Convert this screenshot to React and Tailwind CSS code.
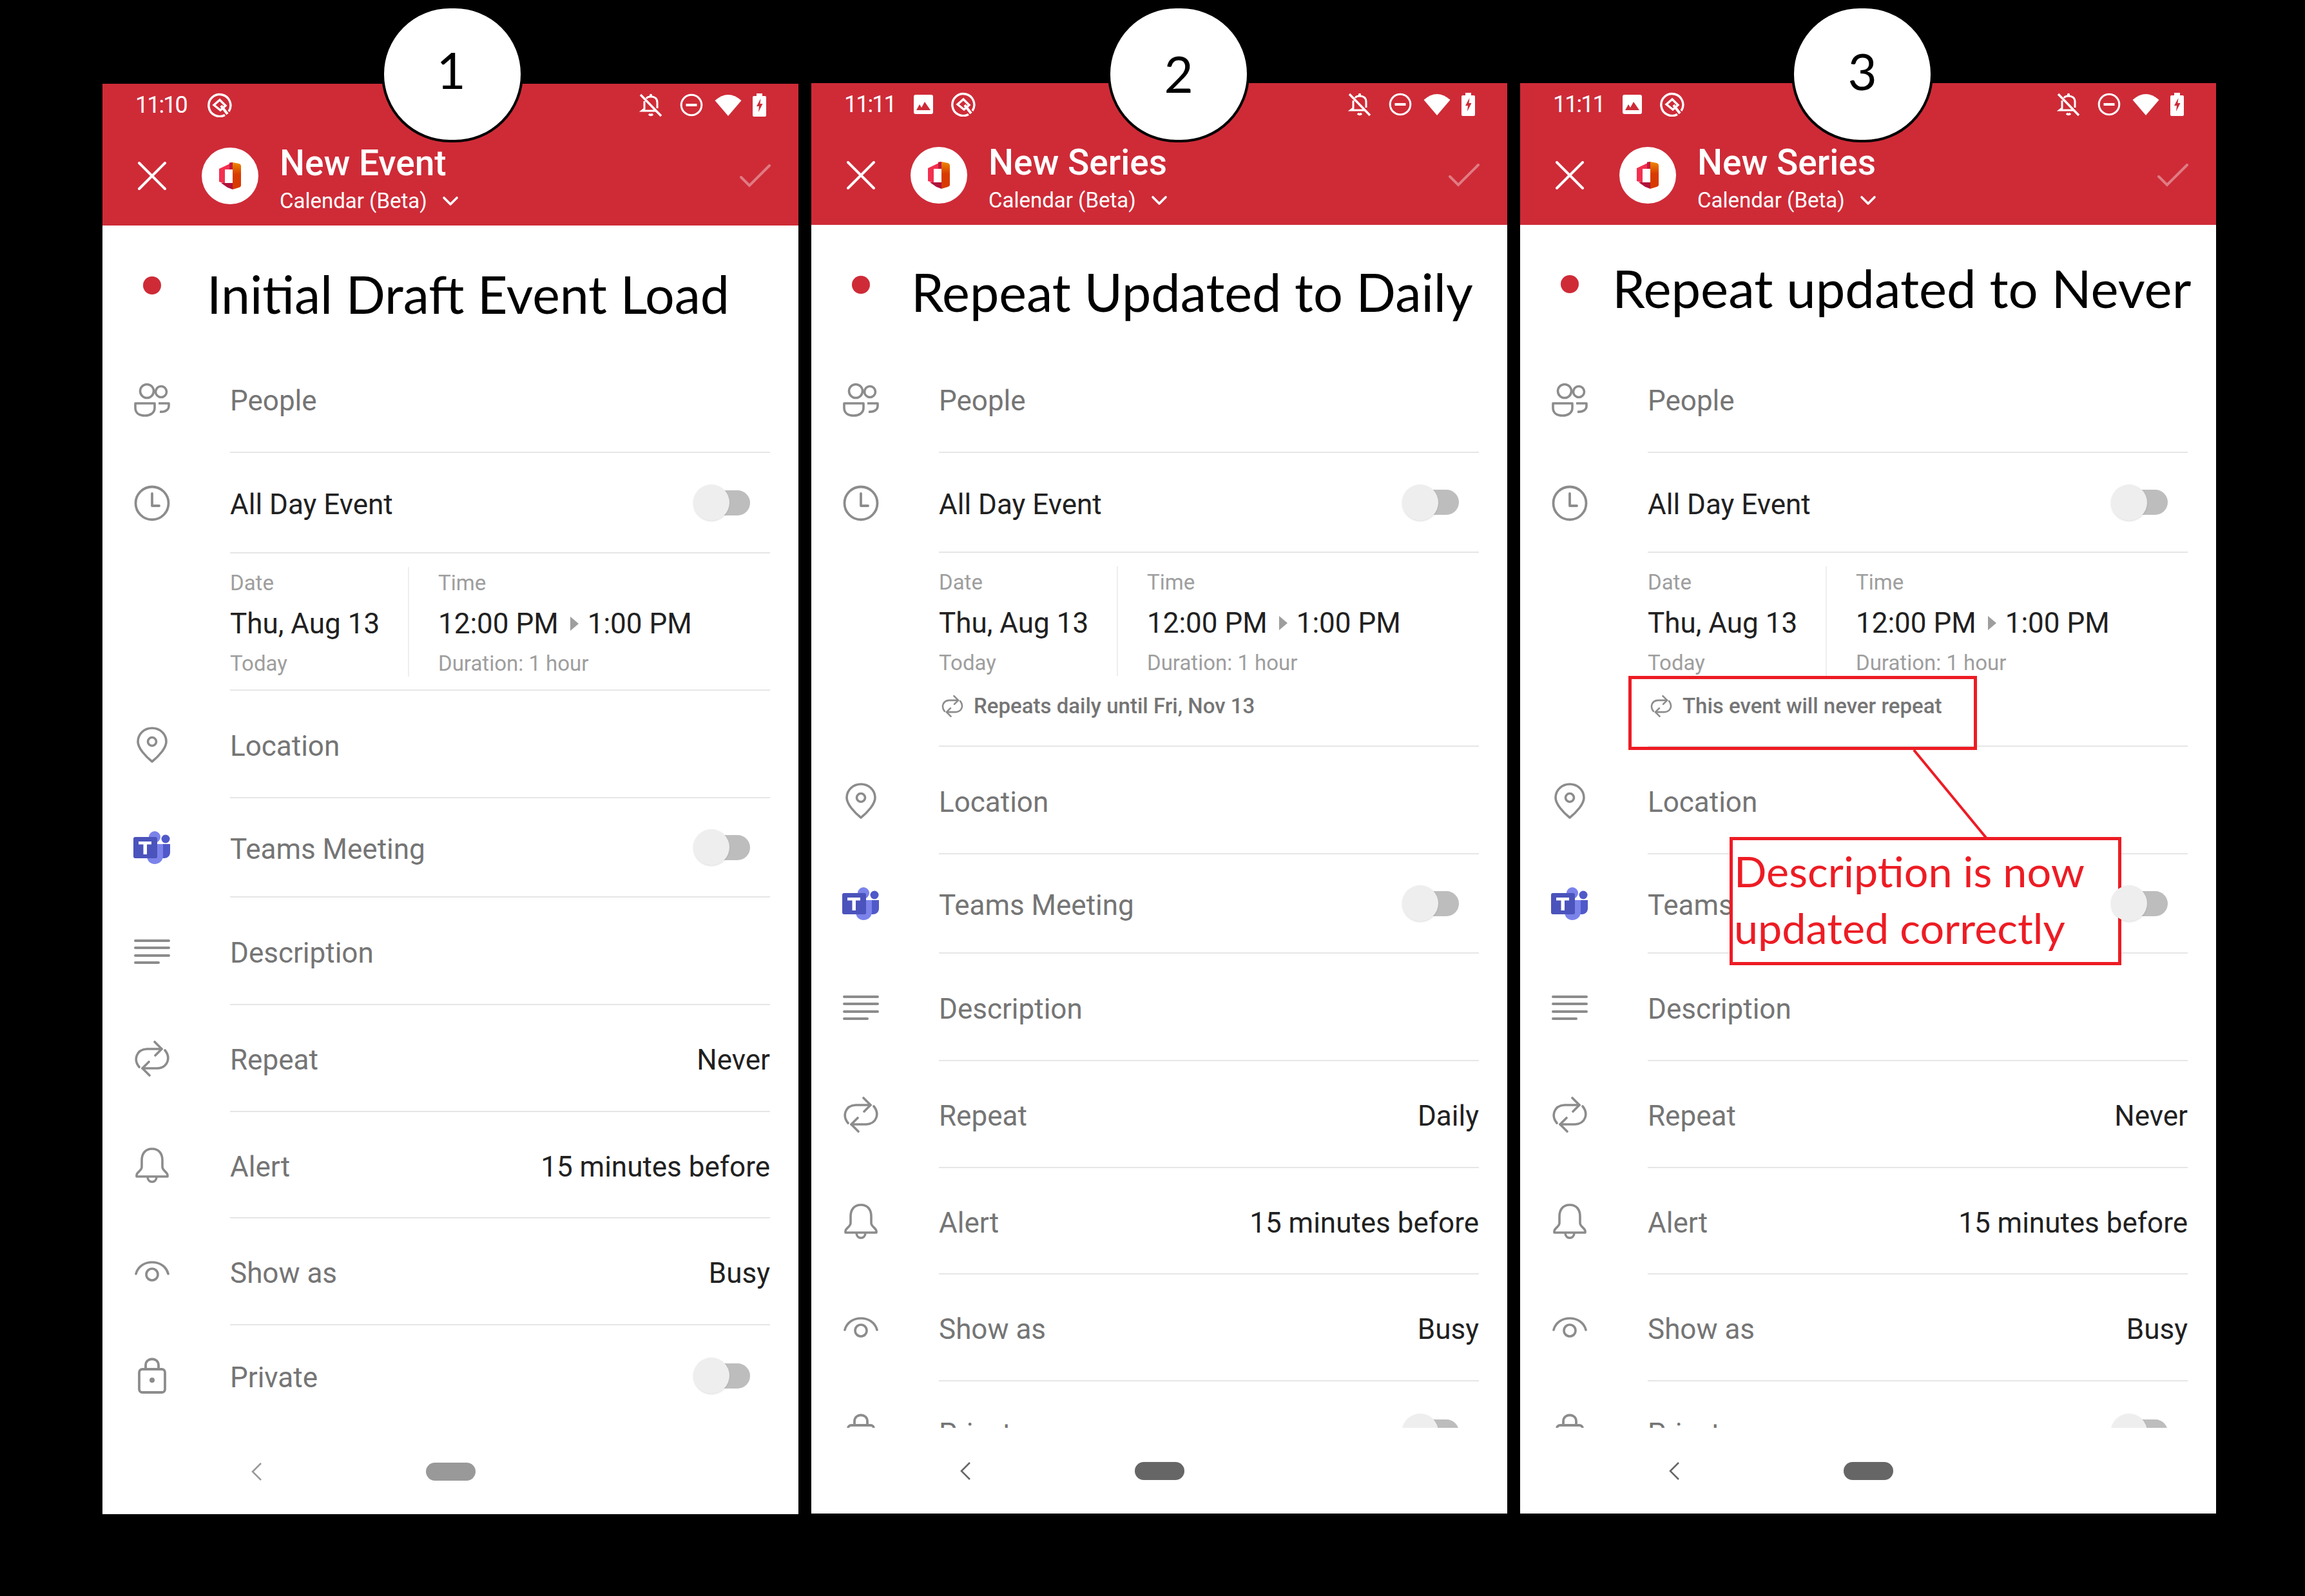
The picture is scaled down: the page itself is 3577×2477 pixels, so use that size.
import React from "react";

const G = "#8c8c8c";

function Q() {
  return (
    <svg width="38" height="38" viewBox="0 0 38 38" fill="none" stroke="#fff" strokeWidth="3.4">
      <path d="M27 34.5 A17 17 0 1 1 33 29" />
      <path d="M10 19 L19 11 L28 20 L20 27 Z" />
      <path d="M21 20 L31 33" strokeWidth="4" />
    </svg>
  );
}
function Picture() {
  return (
    <svg width="30" height="30" viewBox="0 0 30 30">
      <rect x="0" y="0" width="30" height="30" rx="3" fill="#fff" />
      <path d="M4 24 L9 15 L12 20 L17 11 L26 24 Z" fill="#ce2b37" />
    </svg>
  );
}
function BellOff() {
  return (
    <svg width="36" height="38" viewBox="0 0 36 38" fill="none" stroke="#fff" strokeWidth="3">
      <path d="M28 24 V15 C28 9 24 6 18 6 C15 6 12 7 11 9" />
      <path d="M8 13 V25 L4 28 H27" />
      <path d="M15 33 Q18 36 21 33" strokeWidth="3.5" />
      <circle cx="18" cy="4" r="2.2" fill="#fff" stroke="none" />
      <path d="M2 3 L34 36" strokeWidth="3.4" />
    </svg>
  );
}
function Dnd() {
  return (
    <svg width="36" height="36" viewBox="0 0 36 36" fill="none" stroke="#fff">
      <circle cx="18" cy="18" r="15.8" strokeWidth="3" />
      <path d="M9.5 18 H26.5" strokeWidth="4" />
    </svg>
  );
}
function Wifi() {
  return (
    <svg width="42" height="36" viewBox="0 0 42 36">
      <path d="M0.5 11 Q21 -7 41.5 11 L21 35 Z" fill="#fff" />
    </svg>
  );
}
function Battery() {
  return (
    <svg width="21" height="36" viewBox="0 0 21 36">
      <path d="M6 0 H15 V4 H19 Q21 4 21 6 V34 Q21 36 19 36 H2 Q0 36 0 34 V6 Q0 4 2 4 H6 Z" fill="#fff" />
      <path d="M12.5 8 L6 20 H10 L9 29 L15.5 16 H11.5 Z" fill="#ce2b37" />
    </svg>
  );
}
function CloseX() {
  return (
    <svg width="44" height="44" viewBox="0 0 44 44" stroke="#fff" strokeWidth="4" strokeLinecap="round">
      <path d="M2 2 L42 42 M42 2 L2 42" />
    </svg>
  );
}
function Check() {
  return (
    <svg width="48" height="37" viewBox="0 0 48 37" fill="none" stroke="#fff" strokeOpacity="0.38" strokeWidth="4" strokeLinecap="round">
      <path d="M2 20 L15 33 L46 2" />
    </svg>
  );
}
function Chevron() {
  return (
    <svg width="26" height="16" viewBox="0 0 26 16" fill="none" stroke="#fff" strokeWidth="3.6" strokeLinecap="round" strokeLinejoin="round">
      <path d="M3 3 L13 13 L23 3" />
    </svg>
  );
}
function Office({ id }) {
  return (
    <svg width="34" height="42" viewBox="0 0 34 42">
      <defs>
        <linearGradient id={id} x1="0" y1="0" x2="0" y2="1">
          <stop offset="0" stopColor="#ec8a00" />
          <stop offset="0.45" stopColor="#d83b01" />
        </linearGradient>
      </defs>
      <path d="M0 10 L21 0 V11 L9 11 V33 L0 30 Z" fill="#f3304f" />
      <path d="M21 0 L31 2 Q34 3 34 6 V36 Q34 38 31 39 L21 42 Z" fill={`url(#${id})`} />
      <path d="M3 32 L21 32 V42 L13 39 Z" fill="#b0123b" />
      <path d="M16 0.5 L21 0 V11 L16 11 Z" fill="#c2183f" />
    </svg>
  );
}
function People() {
  return (
    <svg width="56" height="54" viewBox="0 0 56 54" fill="none" stroke={G} strokeWidth="3.6">
      <circle cx="20" cy="14" r="10.5" />
      <circle cx="42" cy="15" r="8.5" />
      <path d="M2 33 H32 V40 C32 48 25 52 17 52 C8 52 2 48 2 40 Z" strokeLinejoin="round" />
      <path d="M38 33 H54 V37 C54 43 48 47 40 46" strokeLinejoin="round" />
    </svg>
  );
}
function Clock() {
  return (
    <svg width="56" height="56" viewBox="0 0 56 56" fill="none" stroke={G} strokeWidth="3.8" strokeLinecap="round" strokeLinejoin="round">
      <circle cx="28" cy="28" r="25.5" />
      <path d="M28 13 V32 H39" />
    </svg>
  );
}
function Pin() {
  return (
    <svg width="48" height="56" viewBox="0 0 48 56" fill="none" stroke={G} strokeWidth="3.6" strokeLinejoin="round">
      <path d="M24 2 C36 2 46 11 46 23 C46 33 34 46 24 54 C14 46 2 33 2 23 C2 11 12 2 24 2 Z" />
      <circle cx="24" cy="23" r="6.5" />
    </svg>
  );
}
function Teams() {
  return (
    <svg width="58" height="52" viewBox="0 0 58 52">
      <circle cx="50" cy="12" r="6.5" fill="#5059c9" />
      <path d="M42 20 H57 V33 C57 39 52 42 48 42 H42 Z" fill="#5059c9" />
      <circle cx="33" cy="9" r="9" fill="#7b83eb" />
      <path d="M21 20 H46 V38 C46 46 40 51 33 51 C26 51 21 46 21 38 Z" fill="#7b83eb" />
      <path d="M28 12 H37 V38 Q37 42 33 42 H28 Z" fill="#3d43a3" />
      <rect x="0" y="9" width="37" height="33" rx="3" fill="#4b53bc" />
      <path d="M8 16 H28 V20.5 H21 V36 H15.5 V20.5 H8 Z" fill="#fff" />
    </svg>
  );
}
function Lines() {
  return (
    <svg width="56" height="40" viewBox="0 0 56 40" fill="none" stroke={G} strokeWidth="4" strokeLinecap="round">
      <path d="M2 3 H54 M2 14 H54 M2 26 H54 M2 37 H38" />
    </svg>
  );
}
function Repeat({ size = 56, color = G }) {
  return (
    <svg width={size} height={size} viewBox="0 0 56 56" fill="none" stroke={color} strokeWidth={size < 40 ? 4.2 : 3.6} strokeLinecap="round" strokeLinejoin="round">
      <path d="M8 41 C-1 30 3 14 20 13 L43 13" />
      <path d="M32 2 L43 13 L33 23" />
      <path d="M48 15 C57 26 53 42 36 43 L13 43" />
      <path d="M24 54 L13 43 L23 33" />
    </svg>
  );
}
function Bell() {
  return (
    <svg width="52" height="56" viewBox="0 0 52 56" fill="none" stroke={G} strokeWidth="3.6" strokeLinejoin="round">
      <path d="M26 2 C37 2 42 10 42 20 V30 C42 36 50 38 50 43 V45 H2 V43 C2 38 10 36 10 30 V20 C10 10 15 2 26 2 Z" />
      <path d="M19 45 C19 56 33 56 33 45" />
    </svg>
  );
}
function Eye() {
  return (
    <svg width="54" height="34" viewBox="0 0 54 34" fill="none" stroke={G} strokeWidth="3.6" strokeLinecap="round">
      <path d="M2 20 C8 -4 46 -4 52 20" />
      <circle cx="27" cy="21" r="9" />
    </svg>
  );
}
function Lock() {
  return (
    <svg width="44" height="56" viewBox="0 0 44 56" fill="none" stroke={G} strokeWidth="3.8" strokeLinejoin="round">
      <rect x="2" y="18" width="40" height="36" rx="5" />
      <path d="M12 18 V12 C12 -1 32 -1 32 12 V18" />
      <circle cx="22" cy="35" r="4" fill={G} stroke="none" />
    </svg>
  );
}
function Toggle() {
  return (
    <div className="mr-[31px] flex items-center">
      <div className="z-10 h-[56px] w-[56px] rounded-full bg-[#eeeeee] shadow-sm" />
      <div className="-ml-[37px] h-[39px] w-[69px] rounded-full bg-[#bdbdbd]" />
    </div>
  );
}

function Row({ h, icon, children }) {
  return (
    <div className={`flex ${h}`}>
      <div className="flex w-[154px] items-center justify-center">{icon}</div>
      <div className="mx-[44px] flex flex-1 items-center justify-between border-b-2 border-[#e6e6e6]">{children}</div>
    </div>
  );
}
const Label = ({ children, dark }) => (
  <span className={`pt-[6px] ${dark ? "text-[#212121]" : "text-[#757575]"}`}>{children}</span>
);
const Val = ({ children }) => <span className="pt-[6px] text-[#212121]">{children}</span>;

function Phone({ p }) {
  return (
    <div className={`flex h-[2220px] w-[1080px] flex-col bg-white ${p.top}`}>
      <div className="flex h-[66px] items-center bg-[#ce2b37] pr-[50px] text-white">
        <span className={`text-[36px] tracking-[-2px] ${p.timeCls}`}>{p.time}</span>
        {p.pic && <span className="ml-[28px] mr-[28px] flex"><Picture /></span>}
        <span className={`flex ${p.pic ? "" : "ml-[32px]"}`}><Q /></span>
        <div className="ml-auto flex items-center">
          <BellOff />
          <span className="ml-[27px] flex"><Dnd /></span>
          <span className="ml-[18px] flex"><Wifi /></span>
          <span className="ml-[17px] flex"><Battery /></span>
        </div>
      </div>
      <div className="flex h-[154px] items-center bg-[#ce2b37] text-white">
        <div className="flex w-[154px] justify-center"><CloseX /></div>
        <div className="flex h-[88px] w-[88px] items-center justify-center rounded-full bg-white">
          <Office id={p.id} />
        </div>
        <div className="ml-[33px] mt-[7px] self-start pt-[18px]">
          <div className="text-[55px] font-medium leading-[64px]">{p.head}</div>
          <div className="flex items-center text-[33px] leading-[54px]">
            Calendar (Beta)
            <span className="ml-[23px] flex"><Chevron /></span>
          </div>
        </div>
        <div className="ml-auto mr-[43px] flex"><Check /></div>
      </div>
      <div className="h-[1867px] overflow-hidden text-[44px]">
        <div className="flex h-[187px] items-start">
          <div className="flex w-[154px] justify-center">
            <div className={`h-[28px] w-[28px] rounded-full bg-[#ce2b37] ${p.dotCls}`} />
          </div>
          <div className={`whitespace-nowrap font-[family-name:Lato,sans-serif] leading-[100px] text-black ${p.titleCls}`}>
            {p.title}
          </div>
        </div>
        <Row h={p.h[0]} icon={<People />}><Label>People</Label></Row>
        <Row h={p.h[1]} icon={<Clock />}><Label dark>All Day Event</Label><Toggle /></Row>
        <div className={`flex ${p.h[2]}`}>
          <div className="w-[154px]" />
          <div className="mx-[44px] flex-1 border-b-2 border-[#e6e6e6] pt-[21px]">
            <div className="flex">
              <div className="h-[170px] w-[278px] border-r-2 border-[#eeeeee]">
                <div className="text-[33px] leading-[50px] text-[#9e9e9e]">Date</div>
                <div className="leading-[76px] text-[#212121]">Thu, Aug 13</div>
                <div className="text-[33px] leading-[48px] text-[#9e9e9e]">Today</div>
              </div>
              <div className="pl-[45px]">
                <div className="text-[33px] leading-[50px] text-[#9e9e9e]">Time</div>
                <div className="flex items-center leading-[76px] text-[#212121]">
                  12:00 PM
                  <svg className="ml-[18px] mr-[14px]" width="13" height="22" viewBox="0 0 13 22"><path d="M0 0 L13 11 L0 22 Z" fill="#9e9e9e" /></svg>
                  1:00 PM
                </div>
                <div className="text-[33px] leading-[48px] text-[#9e9e9e]">Duration: 1 hour</div>
              </div>
            </div>
            {p.note && (
              <div className="mt-[21px] flex h-[44px] items-center pl-[4px] text-[33px] font-medium text-[#757575]">
                <Repeat size={34} />
                <span className="ml-[16px]">{p.note}</span>
              </div>
            )}
          </div>
        </div>
        <Row h={p.h[3]} icon={<Pin />}><Label>Location</Label></Row>
        <Row h={p.h[4]} icon={<Teams />}><Label>Teams Meeting</Label><Toggle /></Row>
        <Row h={p.h[5]} icon={<Lines />}><Label>Description</Label></Row>
        <Row h={p.h[6]} icon={<Repeat />}><Label>Repeat</Label><Val>{p.repeat}</Val></Row>
        <Row h={p.h[7]} icon={<Bell />}><Label>Alert</Label><Val>15 minutes before</Val></Row>
        <Row h={p.h[8]} icon={<Eye />}><Label>Show as</Label><Val>Busy</Val></Row>
        <div className={`flex ${p.h[9]}`}>
          <div className="flex w-[154px] items-center justify-center"><Lock /></div>
          <div className="mx-[44px] flex flex-1 items-center justify-between"><Label>Private</Label><Toggle /></div>
        </div>
      </div>
      <div className="flex h-[133px] items-center pl-[231px]">
        <svg width="16" height="28" viewBox="0 0 16 28" fill="none" stroke={p.nav} strokeWidth="2.6"><path d="M15 1 L2 14 L15 27" /></svg>
        <div className={`ml-[255px] h-[28px] w-[77px] rounded-full ${p.pill}`} />
      </div>
    </div>
  );
}

const phones = [
  {
    id: "o1", top: "", time: "11:10", timeCls: "ml-[51px]", head: "New Event", title: "Initial Draft Event Load",
    dotCls: "mt-[79px]", titleCls: "ml-[8px] mt-[56px] text-[80.6px]", repeat: "Never",
    nav: "#999999", pill: "bg-[#999999]",
    h: ["h-[166px]", "h-[156px]", "h-[213px]", "h-[167px]", "h-[154px]", "h-[167px]", "h-[166px]", "h-[165px]", "h-[166px]", "h-[156px]"],
  },
  {
    id: "o2", top: "-mt-px", time: "11:11", timeCls: "ml-[51px]", pic: true, head: "New Series", title: "Repeat Updated to Daily",
    dotCls: "mt-[79px]", titleCls: "ml-[1px] mt-[54px] text-[81px]", repeat: "Daily", note: "Repeats daily until Fri, Nov 13",
    nav: "#666666", pill: "bg-[#666666]",
    h: ["h-[167px]", "h-[155px]", "h-[301px]", "h-[167px]", "h-[154px]", "h-[167px]", "h-[166px]", "h-[165px]", "h-[166px]", "h-[156px]"],
  },
  {
    id: "o3", top: "-mt-px", time: "11:11", timeCls: "ml-[51px]", pic: true, head: "New Series", title: "Repeat updated to Never",
    dotCls: "mt-[78px]", titleCls: "-ml-[11px] mt-[48px] text-[81.5px]", repeat: "Never", note: "This event will never repeat",
    nav: "#666666", pill: "bg-[#666666]",
    h: ["h-[167px]", "h-[155px]", "h-[301px]", "h-[167px]", "h-[154px]", "h-[167px]", "h-[166px]", "h-[165px]", "h-[166px]", "h-[156px]"],
  },
];

function Badge({ cls, n, numCls }) {
  return (
    <div className={`absolute top-[9px] flex h-[212px] w-[220px] items-center justify-center rounded-full border-4 border-black bg-white ${cls}`}>
      <span className={`font-[family-name:Lato,sans-serif] text-[78px] leading-none text-black ${numCls}`}>{n}</span>
    </div>
  );
}

export default function App() {
  return (
    <div className="relative h-[2477px] w-[3577px] overflow-hidden bg-black font-[family-name:Roboto,sans-serif]">
      <div className="flex gap-[20px] pl-[159px] pt-[130px]">
        {phones.map((p) => <Phone key={p.id} p={p} />)}
      </div>
      <Badge cls="left-[592px]" n="1" numCls="mb-[14px] mr-[4px]" />
      <Badge cls="left-[1719px]" n="2" numCls="mb-[2px]" />
      <Badge cls="left-[2780px]" n="3" numCls="mb-[10px]" />

      <div className="absolute left-[2527px] top-[1049px] h-[115px] w-[541px] border-[5px] border-[#ed1c24]" />
      <svg className="absolute left-[2960px] top-[1160px]" width="130" height="145" viewBox="0 0 130 145">
        <path d="M10 4 L122 140" stroke="#ed1c24" strokeWidth="4" />
      </svg>
      <div className="absolute left-[2684px] top-[1299px] h-[199px] w-[608px] border-[5px] border-[#ed1c24] bg-white pl-[2px] pt-[3px] font-[family-name:Lato,sans-serif] text-[66.5px] leading-[88px] text-[#ed1c24]">
        <div>Description is now</div>
        <div>updated correctly</div>
      </div>
    </div>
  );
}
